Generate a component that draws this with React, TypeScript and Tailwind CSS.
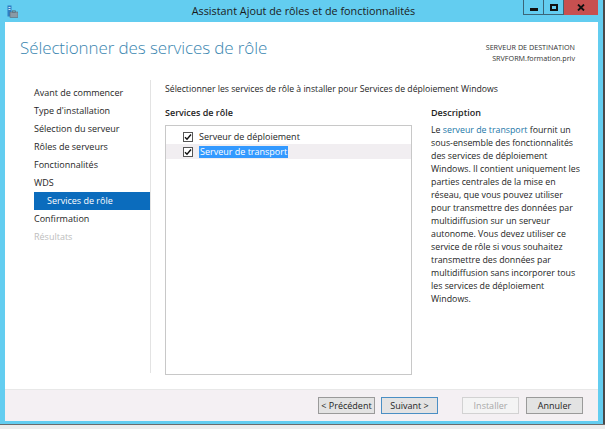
import React from "react";

const navItems = [
  { label: "Avant de commencer" },
  { label: "Type d'installation" },
  { label: "Sélection du serveur" },
  { label: "Rôles de serveurs" },
  { label: "Fonctionnalités" },
  { label: "WDS" },
  { label: "Services de rôle", active: true, sub: true },
  { label: "Confirmation" },
  { label: "Résultats", disabled: true },
];

const descLines = [
  "sous-ensemble des fonctionnalités",
  "des services de déploiement",
  "Windows. Il contient uniquement les",
  "parties centrales de la mise en",
  "réseau, que vous pouvez utiliser",
  "pour transmettre des données par",
  "multidiffusion sur un serveur",
  "autonome. Vous devez utiliser ce",
  "service de rôle si vous souhaitez",
  "transmettre des données par",
  "multidiffusion sans incorporer tous",
  "les services de déploiement",
  "Windows.",
];

function Check() {
  return (
    <span className="flex h-[10px] w-[10px] items-center justify-center border border-[#555] bg-white">
      <svg width="8" height="8" viewBox="0 0 8 8">
        <path d="M1 4.2 L3 6.2 L7 1.5" fill="none" stroke="#111" strokeWidth="1.4" />
      </svg>
    </span>
  );
}

function WinButton({ children, className }: { children: React.ReactNode; className?: string }) {
  return (
    <button
      className={
        "h-[17px] w-[57px] border text-[9px] leading-none " + (className ?? "")
      }
    >
      {children}
    </button>
  );
}

export default function App() {
  return (
    <div className="flex h-[429px] w-[605px] flex-col overflow-hidden bg-[#63cdf0] font-['Open_Sans',sans-serif] text-[#1e1e1e]">
      <div className="flex h-[424px]">
        {/* window */}
        <div className="flex w-[603px] flex-col">
          {/* title bar */}
          <div className="relative flex h-[22px] items-center justify-between">
            <svg className="ml-[7px]" width="11" height="13" viewBox="0 0 11 13">
              <rect x="0.5" y="0.5" width="4" height="11" fill="#2f7fc4" />
              <rect x="1.5" y="2" width="2" height="1" fill="#cfe7f7" />
              <rect x="1.5" y="4" width="2" height="1" fill="#cfe7f7" />
              <rect x="3" y="7" width="8" height="5.5" fill="#8a9aa6" stroke="#5a6a76" strokeWidth="0.6" />
              <rect x="5.5" y="5.8" width="3" height="1.4" fill="none" stroke="#5a6a76" strokeWidth="0.7" />
            </svg>
            <div className="pointer-events-none absolute inset-x-0 top-0 flex h-[22px] items-center justify-center pl-[4px] text-[10.8px] text-[#1b1b1b]">
              Assistant Ajout de rôles et de fonctionnalités
            </div>
            <div className="flex self-start pr-[5px]">
              <div className="flex h-[15px] w-[21px] items-end justify-center border border-t-0 border-[#3b6578] pb-[3px]">
                <span className="h-[3px] w-[8px] bg-[#111]" />
              </div>
              <div className="flex h-[15px] w-[20px] items-center justify-center border border-t-0 border-l-0 border-[#3b6578]">
                <span className="h-[7px] w-[8px] border-2 border-[#111]" />
              </div>
              <div className="flex h-[15px] w-[34px] items-center justify-center bg-[#c75050]">
                <svg width="8" height="7" viewBox="0 0 8 7">
                  <path d="M1 0.5 L7 6.5 M7 0.5 L1 6.5" stroke="#111" strokeWidth="1.8" />
                </svg>
              </div>
            </div>
          </div>

          {/* client */}
          <div className="ml-[5px] flex h-[399px] w-[593px] flex-col bg-white">
            {/* header */}
            <div className="flex h-[58px] items-start justify-between pl-[15px] pr-[23px]">
              <h1 className="mt-[13px] text-[17px] font-light tracking-[-0.1px] text-[#3a86b0]">
                Sélectionner des services de rôle
              </h1>
              <div className="mt-[20px] text-right text-[7.2px] leading-[11px] text-[#333]">
                <div>SERVEUR DE DESTINATION</div>
                <div>SRVFORM.formation.priv</div>
              </div>
            </div>

            {/* main */}
            <div className="flex h-[309px]">
              <nav className="ml-[29px] h-[293px] w-[117px] border-r border-[#e3e3e3] pt-[4px]">
                {navItems.map((item) => (
                  <div
                    key={item.label}
                    className={
                      "flex h-[18px] items-center text-[9px] " +
                      (item.active
                        ? "bg-[#0b6cbd] pl-[13px] text-white"
                        : item.disabled
                          ? "text-[#bdbdbd]"
                          : "text-[#1e1e1e]")
                    }
                  >
                    {item.label}
                  </div>
                ))}
              </nav>

              <div className="flex flex-1 flex-col pl-[14px] pt-[2px]">
                <div className="h-[14px] text-[8.7px] leading-[14px]">
                  Sélectionner les services de rôle à installer pour Services de déploiement Windows
                </div>
                <div className="mt-[10px] flex gap-[19px]">
                  <div className="flex w-[247px] flex-col">
                    <div className="h-[14px] text-[9px] font-semibold leading-[14px]">
                      Services de rôle
                    </div>
                    <div className="mt-[5px] h-[250px] border border-[#c8c8c8] pt-[3px]">
                      <div className="flex h-[15px] items-center gap-[6px] pl-[17px] text-[9px]">
                        <Check />
                        <span>Serveur de déploiement</span>
                      </div>
                      <div className="flex h-[15px] items-center gap-[6px] bg-[#f1eef1] pl-[17px] text-[9px]">
                        <Check />
                        <span className="bg-[#3399ff] px-[1px] leading-[12px] text-white">
                          Serveur de transport
                        </span>
                      </div>
                    </div>
                  </div>

                  <div className="flex flex-col">
                    <div className="h-[14px] text-[9px] font-semibold leading-[14px]">
                      Description
                    </div>
                    <div className="mt-[4px] whitespace-nowrap text-[8.8px] leading-[13px]">
                      <div>
                        Le <span className="text-[#2277a8]">serveur de transport</span> fournit un
                      </div>
                      {descLines.map((l, i) => (
                        <div key={i}>{l}</div>
                      ))}
                    </div>
                  </div>
                </div>
              </div>
            </div>

            {/* footer */}
            <div className="flex h-[32px] items-center justify-end border-t border-[#e8e8e8] bg-[#f4f0f3] pr-[15px]">
              <div className="flex gap-[6px]">
                <WinButton className="border-[#9a9a9a] bg-[#e3e3e3]">&lt; Précédent</WinButton>
                <WinButton className="border-[#4a8fc4] bg-[#e3e3e3]">Suivant &gt;</WinButton>
              </div>
              <div className="ml-[24px] flex gap-[7px]">
                <WinButton className="border-[#d2d2d2] bg-[#f4f4f4] text-[#a8a8a8]">Installer</WinButton>
                <WinButton className="border-[#9a9a9a] bg-[#e3e3e3]">Annuler</WinButton>
              </div>
            </div>
          </div>
        </div>
        <div className="w-[2px] bg-[#4a4a4a]" />
      </div>
      <div className="h-[5px] border-t border-[#6b6b6b] bg-[#ececec]" />
    </div>
  );
}
